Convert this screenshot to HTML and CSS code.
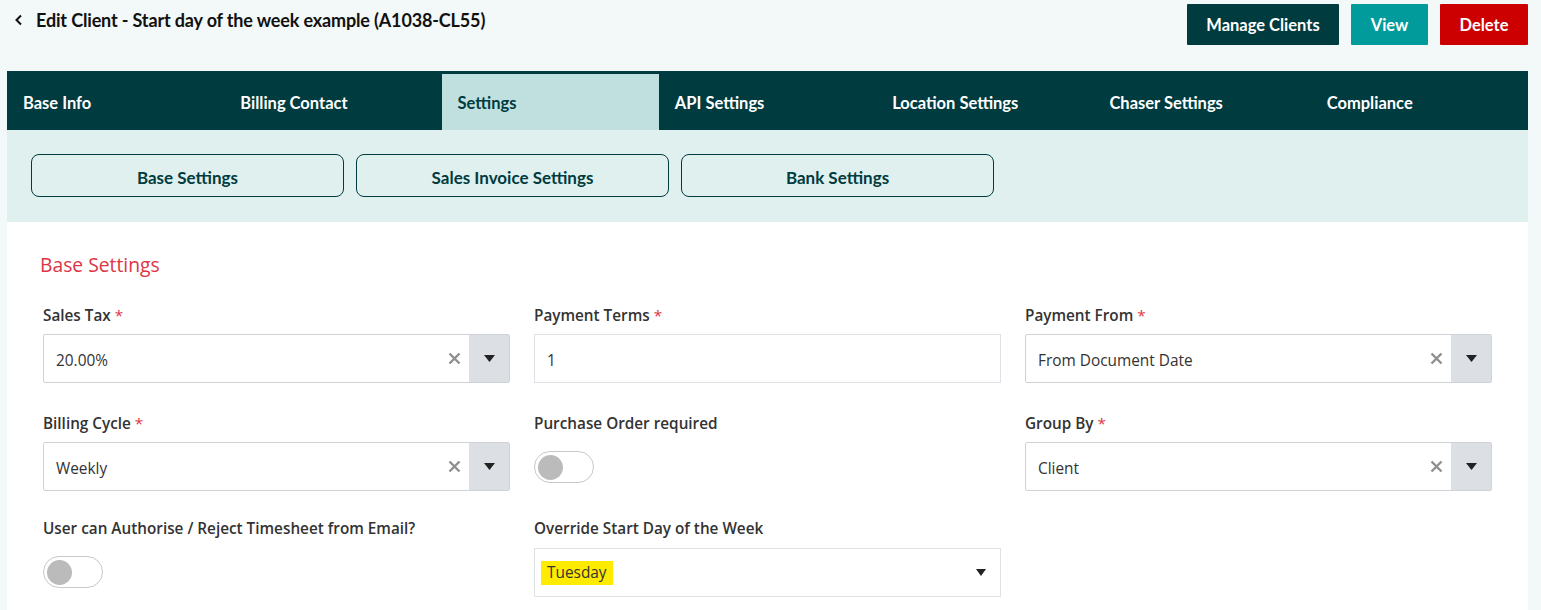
FILE: index.html
```html
<!DOCTYPE html>
<html>
<head>
<meta charset="utf-8">
<link rel="stylesheet" href="styles.css">
</head>
<body>
<div class="page">
  <header class="topbar">
    <div class="title">
      <svg class="back" width="10" height="12" viewBox="0 0 10 12"><path d="M7 1.5 L2.5 6 L7 10.5" fill="none" stroke="#111" stroke-width="2"/></svg>
      <h1>Edit Client - Start day of the week example (A1038-CL55)</h1>
    </div>
    <div class="actions">
      <button class="btn btn-dark">Manage Clients</button>
      <button class="btn btn-teal">View</button>
      <button class="btn btn-red">Delete</button>
    </div>
  </header>

  <nav class="tabs">
    <div class="tab">Base Info</div>
    <div class="tab">Billing Contact</div>
    <div class="tab active">Settings</div>
    <div class="tab">API Settings</div>
    <div class="tab">Location Settings</div>
    <div class="tab">Chaser Settings</div>
    <div class="tab">Compliance</div>
  </nav>

  <div class="subtabs">
    <button class="subtab">Base Settings</button>
    <button class="subtab">Sales Invoice Settings</button>
    <button class="subtab">Bank Settings</button>
  </div>

  <main class="content">
    <h2 class="section-title">Base Settings</h2>
    <div class="grid">
      <div class="field">
        <label>Sales Tax <span class="req">*</span></label>
        <div class="select">
          <span class="value">20.00%</span>
          <span class="clear"><svg width="13" height="13" viewBox="0 0 13 13"><path d="M1.5 1.5 L11.5 11.5 M11.5 1.5 L1.5 11.5" stroke="#8f8f8f" stroke-width="2.4"/></svg></span>
          <span class="arrow"><svg width="11" height="7" viewBox="0 0 11 7"><path d="M0 0 H11 L5.5 7 Z" fill="#222"/></svg></span>
        </div>
      </div>
      <div class="field">
        <label>Payment Terms <span class="req">*</span></label>
        <div class="input">1</div>
      </div>
      <div class="field">
        <label>Payment From <span class="req">*</span></label>
        <div class="select">
          <span class="value">From Document Date</span>
          <span class="clear"><svg width="13" height="13" viewBox="0 0 13 13"><path d="M1.5 1.5 L11.5 11.5 M11.5 1.5 L1.5 11.5" stroke="#8f8f8f" stroke-width="2.4"/></svg></span>
          <span class="arrow"><svg width="11" height="7" viewBox="0 0 11 7"><path d="M0 0 H11 L5.5 7 Z" fill="#222"/></svg></span>
        </div>
      </div>

      <div class="field">
        <label>Billing Cycle <span class="req">*</span></label>
        <div class="select">
          <span class="value">Weekly</span>
          <span class="clear"><svg width="13" height="13" viewBox="0 0 13 13"><path d="M1.5 1.5 L11.5 11.5 M11.5 1.5 L1.5 11.5" stroke="#8f8f8f" stroke-width="2.4"/></svg></span>
          <span class="arrow"><svg width="11" height="7" viewBox="0 0 11 7"><path d="M0 0 H11 L5.5 7 Z" fill="#222"/></svg></span>
        </div>
      </div>
      <div class="field">
        <label>Purchase Order required</label>
        <div class="toggle"><span class="knob"></span></div>
      </div>
      <div class="field">
        <label>Group By <span class="req">*</span></label>
        <div class="select">
          <span class="value">Client</span>
          <span class="clear"><svg width="13" height="13" viewBox="0 0 13 13"><path d="M1.5 1.5 L11.5 11.5 M11.5 1.5 L1.5 11.5" stroke="#8f8f8f" stroke-width="2.4"/></svg></span>
          <span class="arrow"><svg width="11" height="7" viewBox="0 0 11 7"><path d="M0 0 H11 L5.5 7 Z" fill="#222"/></svg></span>
        </div>
      </div>

      <div class="field last-row">
        <label>User can Authorise / Reject Timesheet from Email?</label>
        <div class="toggle"><span class="knob"></span></div>
      </div>
      <div class="field last-row">
        <label>Override Start Day of the Week</label>
        <div class="input native">
          <span class="hl">Tuesday</span>
          <svg width="10" height="7" viewBox="0 0 10 7"><path d="M0 0 H10 L5 7 Z" fill="#222"/></svg>
        </div>
      </div>
    </div>
  </main>
</div>
</body>
</html>
```

FILE: styles.css
```css
* { box-sizing: border-box; }
html, body { margin: 0; padding: 0; }
body {
  background: #f3f8f8;
  font-family: "Open Sans", "Noto Sans", sans-serif;
  color: #212529;
  width: 1541px;
  height: 610px;
  overflow: hidden;
}
.page { padding: 0 13px 0 7px; }

.topbar {
  display: flex;
  justify-content: space-between;
  align-items: flex-start;
  height: 71px;
}
.title {
  display: flex;
  align-items: center;
  gap: 12px;
  padding: 9px 0 0 7px;
}
.back { display: block; }
.title h1 {
  margin: 0;
  font-family: Lato, sans-serif;
  font-weight: 700;
  font-size: 18px;
  color: #111;
  letter-spacing: -0.15px;
}
.actions { display: flex; gap: 12px; padding-top: 4px; }
.btn {
  border: none;
  height: 41px;
  font-family: Lato, sans-serif;
  font-weight: 700;
  font-size: 16.5px;
  color: #fff;
  border-radius: 1px;
  padding: 0;
}
.btn-dark { background: #003b40; width: 152px; }
.btn-teal { background: #009b9a; width: 77px; }
.btn-red { background: #cc0000; width: 88px; }

.tabs {
  display: grid;
  grid-template-columns: repeat(7, 1fr);
  background: #003b40;
  height: 59px;
}
.tab {
  display: flex;
  align-items: center;
  padding: 5px 0 0 16px;
  font-family: Lato, sans-serif;
  font-weight: 700;
  font-size: 16.5px;
  color: #fff;
}
.tab.active { background: #c0e0df; color: #003b40; margin-top: 3px; padding-top: 2px; }

.subtabs {
  background: #e0f0ef;
  height: 92px;
  display: flex;
  gap: 12px;
  padding: 24px 0 0 24px;
}
.subtab {
  width: 313px;
  height: 43px;
  background: #e0f0ef;
  border: 1px solid #003b40;
  border-radius: 8px;
  font-family: Lato, sans-serif;
  font-weight: 700;
  font-size: 17px;
  color: #003b40;
  padding-top: 5px;
}

.content {
  background: #fff;
  height: 400px;
  padding: 30px 36px 0 33px;
}
.section-title {
  margin: 0;
  font-family: "Open Sans", sans-serif;
  font-weight: 400;
  font-size: 19.3px;
  color: #dc3545;
  line-height: 25px;
}
.grid {
  display: grid;
  grid-template-columns: repeat(3, 467px);
  column-gap: 24px;
  row-gap: 30px;
  margin-top: 28px;
  padding-left: 3px;
}
.field label {
  display: block;
  font-size: 15.3px;
  font-weight: 600;
  color: #333;
  line-height: 20px;
  margin-bottom: 9px;
}
.field.last-row { margin-top: -3px; }
.field.last-row label { margin-bottom: 10px; }
.req { color: #dc3545; font-weight: 400; }

.select {
  height: 49px;
  border: 1px solid #cfd3d7;
  border-radius: 2px;
  display: flex;
  align-items: center;
  font-size: 15.4px;
  color: #333;
}
.select .value { flex: 1; padding: 3px 0 0 12px; }
.select .clear { width: 21px; display: flex; align-items: center; }
.select .clear svg { display: block; }
.select .arrow {
  width: 40px;
  align-self: stretch;
  background: #dcdfe3;
  display: flex;
  align-items: center;
  justify-content: center;
}
.input {
  height: 49px;
  border: 1px solid #dee2e6;
  display: flex;
  align-items: center;
  padding: 3px 0 0 12px;
  font-size: 15.4px;
  color: #333;
}
.input.native { justify-content: space-between; padding: 0 14px 0 6px; }
.hl { background: #ffeb00; padding: 2px 6px; line-height: 20px; }

.toggle {
  margin-top: 18px;
  width: 60px;
  height: 32px;
  border: 1px solid #c8c8c8;
  border-radius: 16px;
  padding: 3px;
}
.knob {
  display: block;
  width: 25px;
  height: 25px;
  border-radius: 50%;
  background: #bbb;
}
```
